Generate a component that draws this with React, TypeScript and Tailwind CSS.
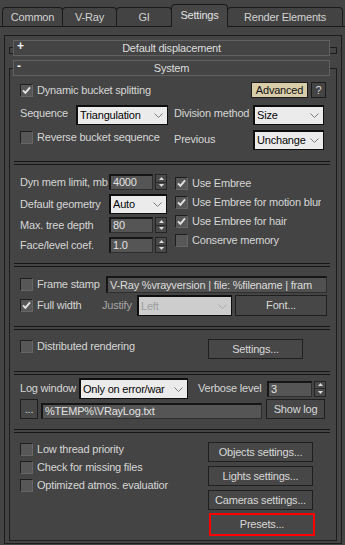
import React from 'react'

const dark = 'border-t-[#161616] border-l-[#161616] border-b-[#2e2e2e] border-r-[#2e2e2e]'

function Check({ on }: { on?: boolean }) {
  return (
    <div className="w-[13px] h-[13px] shrink-0 bg-[#575757] border border-t-[#1e1e1e] border-l-[#1e1e1e] border-b-[#666666] border-r-[#666666] flex items-center justify-center">
      {on && (
        <svg width="9" height="9" viewBox="0 0 9 9">
          <path d="M1 4.3 L3.4 6.8 L8 1.4" fill="none" stroke="#e4e4e4" strokeWidth="1.9" />
        </svg>
      )}
    </div>
  )
}

function CheckRow({ on, label, className = '' }: { on?: boolean; label: string; className?: string }) {
  return (
    <div className={`flex items-center gap-[4px] whitespace-nowrap overflow-hidden ${className}`}>
      <Check on={on} />
      <span>{label}</span>
    </div>
  )
}

function Chevron({ color = '#7c7c7c' }: { color?: string }) {
  return (
    <svg width="9" height="5" viewBox="0 0 9 5" className="shrink-0">
      <path d="M0.5 0.5 L4.5 4.5 L8.5 0.5" fill="none" stroke={color} strokeWidth="1" />
    </svg>
  )
}

function Drop({ value, className = '', disabled }: { value: string; className?: string; disabled?: boolean }) {
  return (
    <div
      className={`h-[20px] shrink-0 flex items-center border-t-2 border-l-2 border-b border-r border-[#0e0e0e] pl-[2px] pr-[4px] ${
        disabled ? 'bg-[#cdcdcd] text-[#9d9d9d]' : 'bg-[#ebebeb] text-[#050505]'
      } ${className}`}
    >
      <span className="flex-1 whitespace-nowrap overflow-hidden">{value}</span>
      <Chevron color={disabled ? '#aaaaaa' : '#7c7c7c'} />
    </div>
  )
}

function Field({ value, className = '' }: { value: string; className?: string }) {
  return (
    <div
      className={`h-[16px] shrink-0 flex items-center bg-[#555555] border-t-2 border-l-2 border-b border-r ${dark} pl-[2px] text-[#e2e2e2] whitespace-nowrap overflow-hidden ${className}`}
    >
      {value}
    </div>
  )
}

function Arrows() {
  return (
    <div className="w-[12px] h-[16px] shrink-0 border border-[#242424] bg-[#4a4a4a] flex flex-col">
      <div className="flex-1 flex items-center justify-center border-b border-[#2a2a2a]">
        <svg width="5" height="3" viewBox="0 0 5 3">
          <path d="M0 3 L2.5 0 L5 3Z" fill="#dcdcdc" />
        </svg>
      </div>
      <div className="flex-1 flex items-center justify-center">
        <svg width="5" height="3" viewBox="0 0 5 3">
          <path d="M0 0 L2.5 3 L5 0Z" fill="#dcdcdc" />
        </svg>
      </div>
    </div>
  )
}

function Spinner({ value, className = '' }: { value: string; className?: string }) {
  return (
    <div className="flex items-center gap-[2px]">
      <Field value={value} className={className} />
      <Arrows />
    </div>
  )
}

function Btn({ children, className = '' }: { children: React.ReactNode; className?: string }) {
  return (
    <div
      className={`h-[20px] shrink-0 flex items-center justify-center bg-[#474747] border border-[#1f1f1f] text-[#d8d8d8] whitespace-nowrap ${className}`}
    >
      {children}
    </div>
  )
}

function Sep({ className = '' }: { className?: string }) {
  return <div className={`h-[4px] -ml-[6px] mr-[6px] border-y border-[#161616] ${className}`} />
}

function Header({ title, open, className = '' }: { title: string; open?: boolean; className?: string }) {
  return (
    <div
      className={`relative h-[16px] ml-[3px] mr-[6px] border border-[#616161] bg-[#444444] flex items-center justify-center text-[#dedede] ${className}`}
    >
      <span className="absolute left-[3px] top-[-1px] font-bold text-[12px] text-[#f0f0f0]">{open ? '-' : '+'}</span>
      <span>{title}</span>
    </div>
  )
}

const tabs: { name: string; w: string; active?: boolean }[] = [
  { name: 'Common', w: 'w-[61px]' },
  { name: 'V-Ray', w: 'w-[55px]' },
  { name: 'GI', w: 'w-[56px]' },
  { name: 'Settings', w: 'w-[57px]', active: true },
  { name: 'Render Elements', w: 'w-[116px]' },
]

export default function App() {
  return (
    <div className="w-[345px] h-[545px] bg-[#444444] overflow-hidden text-[#d6d6d6] text-[11px] leading-[13px] tracking-[-0.2px] font-['Liberation_Sans',Arial,sans-serif]">
      {/* tab strip */}
      <div className="h-[27px] flex items-end pl-[2px] border-b border-[#1a1a1a]">
        {tabs.map((t, i) => (
          <div
            key={t.name}
            className={`${t.w} ${i > 0 ? '-ml-px' : ''} shrink-0 flex items-center justify-center border-t border-l border-r border-[#1a1a1a] rounded-t-[4px] ${
              t.active ? 'h-[23px] -mb-px pb-[1px] bg-[#464646] text-[#e2e2e2] relative' : 'h-[19px] bg-[#434343] text-[#d2d2d2]'
            }`}
          >
            {t.name}
          </div>
        ))}
      </div>

      {/* panel */}
      <div className="ml-[4px] mr-[3px] mt-[8px] h-[509px] border border-[#1c1c1c] pl-[4px] pr-[4px] pt-[11px]">
        {/* Default displacement (collapsed) */}
        <div className="h-[7px] border border-[#1c1c1c]">
          <Header title="Default displacement" className="-mt-[8px]" />
        </div>

        {/* System */}
        <div className="mt-[14px] h-[473px] border border-[#1c1c1c]">
          <Header title="System" open className="-mt-[9px]" />

          <div className="pl-[10px]">
            {/* row 1 */}
            <div className="mt-[6px] h-[16px] flex items-center">
              <CheckRow on label="Dynamic bucket splitting" className="w-[231px]" />
              <div className="w-[57px] h-[16px] flex items-center justify-center bg-[#d9cca8] border border-[#1c1c1c] text-[#111111]">
                Advanced
              </div>
              <div className="ml-[3px] w-[15px] h-[16px] flex items-center justify-center bg-[#444444] border border-[#1c1c1c]">
                ?
              </div>
            </div>

            {/* row 2 */}
            <div className="mt-[7px] h-[20px] flex items-start">
              <span className="w-[56px] pt-[2px]">Sequence</span>
              <Drop value="Triangulation" className="w-[92px]" />
              <span className="ml-[6px] w-[79px] pt-[2px] whitespace-nowrap">Division method</span>
              <Drop value="Size" className="w-[71px]" />
            </div>

            {/* row 3 */}
            <div className="mt-[5px] h-[20px] flex items-start">
              <CheckRow label="Reverse bucket sequence" className="w-[154px] pt-[1px]" />
              <span className="w-[79px] pt-[3px]">Previous</span>
              <Drop value="Unchange" className="w-[71px]" />
            </div>

            <Sep className="mt-[11px]" />

            {/* memory / embree */}
            <div className="flex">
              <div className="w-[155px]">
                <div className="mt-[9px] h-[16px] flex items-center">
                  <span className="w-[89px] whitespace-nowrap">Dyn mem limit, mb</span>
                  <Spinner value="4000" className="w-[44px]" />
                </div>
                <div className="mt-[4px] h-[20px] flex items-center">
                  <span className="w-[89px] whitespace-nowrap">Default geometry</span>
                  <Drop value="Auto" className="w-[58px]" />
                </div>
                <div className="mt-[3px] h-[16px] flex items-center">
                  <span className="w-[89px] whitespace-nowrap">Max. tree depth</span>
                  <Spinner value="80" className="w-[44px]" />
                </div>
                <div className="mt-[4px] h-[16px] flex items-center">
                  <span className="w-[89px] whitespace-nowrap">Face/level coef.</span>
                  <Spinner value="1.0" className="w-[44px]" />
                </div>
              </div>
              <div className="pt-[9px]">
                <CheckRow on label="Use Embree" className="h-[19px]" />
                <CheckRow on label="Use Embree for motion blur" className="h-[19px]" />
                <CheckRow on label="Use Embree for hair" className="h-[19px]" />
                <CheckRow label="Conserve memory" className="h-[19px]" />
              </div>
            </div>

            <Sep className="mt-[10px]" />

            {/* frame stamp */}
            <div className="mt-[9px] h-[17px] flex items-center">
              <CheckRow label="Frame stamp" className="w-[86px]" />
              <div className={`w-[221px] h-[17px] flex items-center bg-[#505050] border-t-2 border-l-2 border-b border-r ${dark} pl-[2px] text-[#dcdcdc] whitespace-nowrap overflow-hidden`}>
                V-Ray %vrayversion | file: %filename | fram
              </div>
            </div>
            <div className="mt-[2px] h-[21px] flex items-center">
              <CheckRow on label="Full width" className="w-[82px]" />
              <span className="w-[35px] text-[#a6a6a6]">Justify</span>
              <Drop value="Left" disabled className="w-[95px] h-[21px]" />
              <Btn className="ml-[3px] w-[92px] h-[21px]">Font...</Btn>
            </div>

            <Sep className="mt-[10px]" />

            {/* distributed */}
            <div className="mt-[9px] h-[20px] flex items-start">
              <CheckRow label="Distributed rendering" className="w-[188px] pt-[1px]" />
              <Btn className="w-[95px]">Settings...</Btn>
            </div>

            <Sep className="mt-[12px]" />

            {/* log */}
            <div className="mt-[3px] h-[21px] flex items-center">
              <span className="w-[59px] whitespace-nowrap">Log window</span>
              <Drop value="Only on error/war" className="w-[109px] h-[21px]" />
              <span className="ml-[10px] w-[69px] whitespace-nowrap">Verbose level</span>
              <Spinner value="3" className="w-[45px]" />
            </div>
            <div className="h-[20px] flex items-end">
              <Btn className="w-[18px] h-[16px]">...</Btn>
              <Field value="%TEMP%\VRayLog.txt" className="ml-[3px] w-[221px]" />
              <Btn className="ml-[4px] w-[59px]">Show log</Btn>
            </div>

            <Sep className="mt-[10px]" />

            {/* misc */}
            <div className="flex">
              <div className="w-[188px] pt-[7px]">
                <CheckRow label="Low thread priority" className="h-[18px]" />
                <CheckRow label="Check for missing files" className="h-[18px]" />
                <CheckRow label="Optimized atmos. evaluatior" className="h-[18px]" />
              </div>
              <div className="pt-[9px] flex flex-col">
                <Btn className="w-[105px]">Objects settings...</Btn>
                <Btn className="mt-[4px] w-[105px]">Lights settings...</Btn>
                <Btn className="mt-[4px] w-[105px]">Cameras settings...</Btn>
                <div className="mt-[3px] ml-[1px] w-[106px] h-[23px] border-2 border-[#ff0000] bg-[#474747] flex items-center justify-center text-[#d8d8d8]">
                  Presets...
                </div>
              </div>
            </div>
          </div>
        </div>
      </div>
    </div>
  )
}
